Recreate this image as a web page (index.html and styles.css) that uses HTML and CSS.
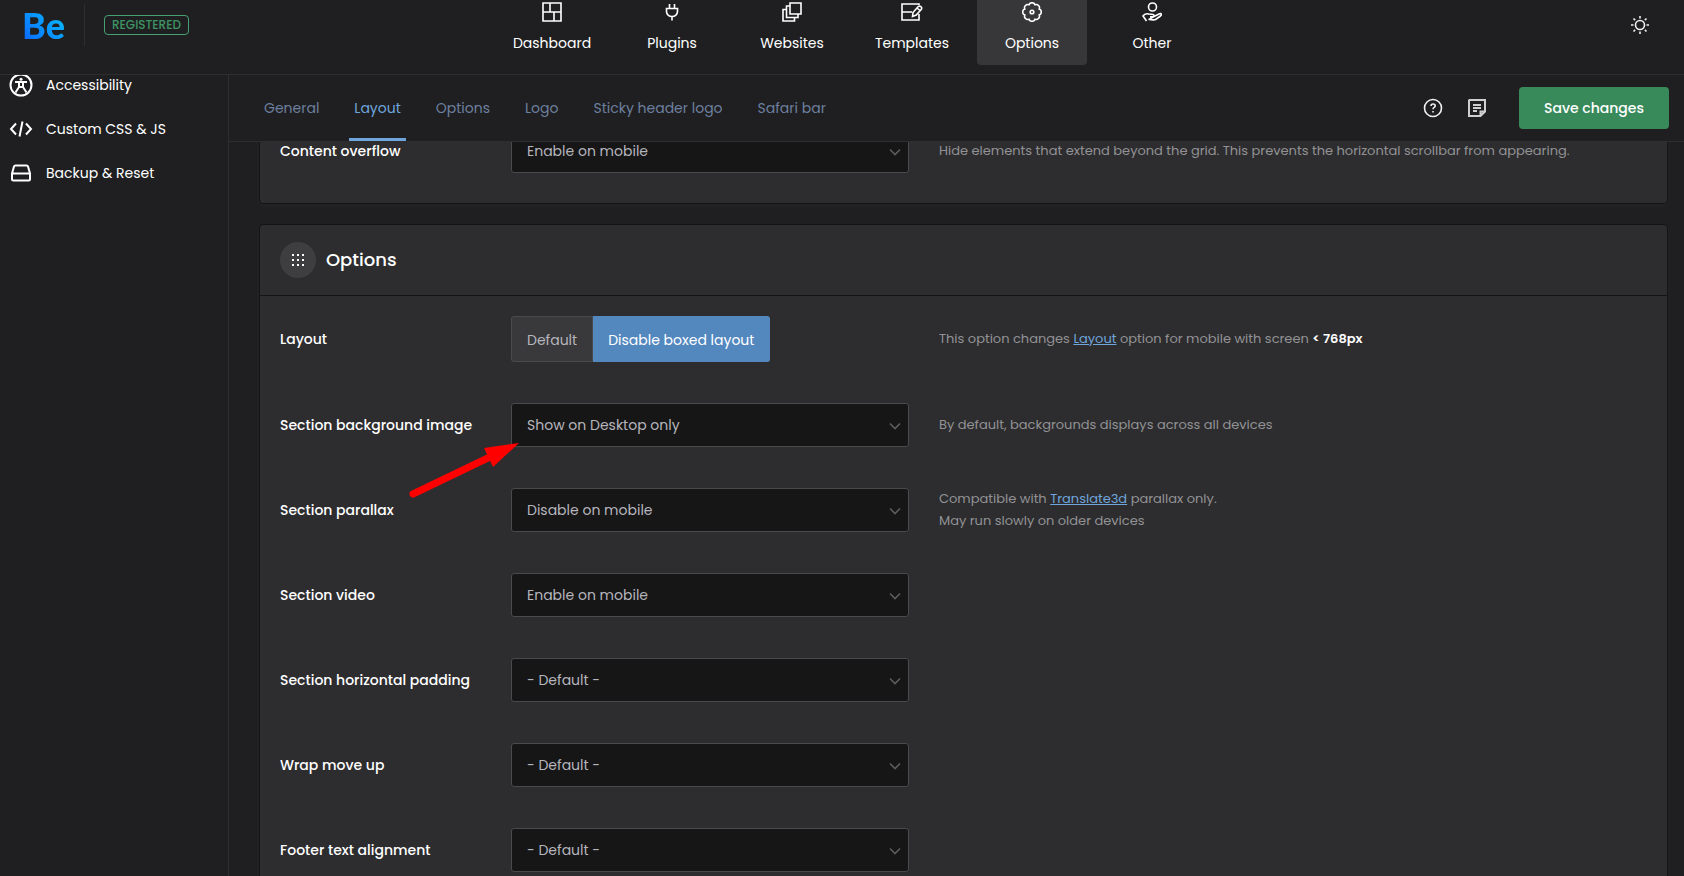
FILE: index.html
```html
<!DOCTYPE html>
<html lang="en">
<head>
<meta charset="utf-8">
<title>Theme Options</title>
<link rel="stylesheet" href="styles.css">
</head>
<body>
<div class="app">
  <header class="topbar">
    <div class="brand">
      <a class="logo" href="#">Be</a>
      <span class="status">REGISTERED</span>
    </div>
    <nav class="main-nav" aria-label="Main">
      <a href="#"><svg viewBox="0 0 20 20"><path d="M1 1h18v18H1zM1 10h18M8 1v9M12 10v9"/></svg>Dashboard</a>
      <a href="#"><svg viewBox="0 0 20 20"><path d="M7.500 2v4.500M12.500 2v4.500M4.500 6.500h11v3a5.500 5 0 0 1-11 0zM10 14.500v4"/></svg>Plugins</a>
      <a href="#"><svg viewBox="0 0 20 20"><path d="M8 1h11v11H8zM8 4H4.500v11.500H16V12M4.500 7.500H1V19h11.500v-3.500"/></svg>Websites</a>
      <a href="#"><svg class="wide" viewBox="0 0 22 20"><path d="M18 3V2H1v16h17v-6M1 10h10M11.500 14.500l.5-4 5-5.700c1.800-1.800 4.800.4 3.200 2.700l-5 5.500zM16 6l3 2.500"/></svg>Templates</a>
      <a class="active" href="#"><svg viewBox="0 0 20 20"><circle cx="10" cy="10" r="1.800"/><path d="M17.200 7a3.200 3.200 0 0 1 0 6a3.200 3.200 0 0 1-4.200 4.200a3.200 3.200 0 0 1-6 0a3.200 3.200 0 0 1-4.200-4.200a3.200 3.200 0 0 1 0-6a3.200 3.200 0 0 1 4.200-4.200a3.200 3.200 0 0 1 6 0a3.200 3.200 0 0 1 4.200 4.200z"/></svg>Options</a>
      <a href="#"><svg viewBox="0 0 20 20"><circle cx="10.500" cy="5" r="4"/><path d="M4.500 19l-3.500-5c1.500-2.500 4-2.500 6-2l4 .5c1.500.3 1.500 2.200 0 2.300H8M12.500 14.200l5-2.400c2-.8 2.500 1 1 2.200l-5 3.500c-1.500 1-5.500-.3-7 .1z"/></svg>Other</a>
    </nav>
    <button class="icon-button" aria-label="Switch theme"><svg viewBox="0 0 20 20"><circle cx="10" cy="10" r="4.500"/><path d="M10 1v2.500M10 16.500V19M1 10h2.500M16.500 10H19M3.500 3.500l1.600 1.600M14.900 14.900l1.600 1.600M3.500 16.500l1.600-1.600M14.900 5.100l1.600-1.600"/></svg></button>
  </header>

  <div class="workspace">
    <nav class="sidebar" aria-label="Sections">
      <a href="#"><svg viewBox="0 0 24 24"><circle cx="12" cy="12" r="10.500"/><circle class="solid" cx="12" cy="6.200" r="1.500"/><path d="M6 9h12M10 9v5l-3.500 5.500M14 9v5l3.500 5.500M10.500 14h3"/></svg>Accessibility</a>
      <a href="#"><svg viewBox="0 0 24 24"><path d="M7 6.500L2 12l5 5.500M17 6.500l5 5.500-5 5.500M13.500 4.500l-3 15"/></svg>Custom CSS &amp; JS</a>
      <a href="#"><svg viewBox="0 0 24 24"><path d="M3 12.500l2-7q.3-1 1.500-1h11q1.200 0 1.500 1l2 7V18q0 1.500-1.500 1.500h-15Q3 19.500 3 18zM3 12.500h18"/></svg>Backup &amp; Reset</a>
    </nav>

    <div class="content">
      <div class="subbar">
        <nav class="tabs" aria-label="Layout sections">
          <a href="#">General</a>
          <a class="active" href="#">Layout</a>
          <a href="#">Options</a>
          <a href="#">Logo</a>
          <a href="#">Sticky header logo</a>
          <a href="#">Safari bar</a>
        </nav>
        <div class="actions">
          <button class="icon-button" aria-label="Help"><svg viewBox="0 0 20 20"><circle cx="10" cy="10" r="8.500"/><path d="M8 8c0-2.700 4.200-2.700 4.200 0 0 1.500-2.200 1.400-2.200 3.200M10 13v1.500"/></svg></button>
          <button class="icon-button notes" aria-label="Notes"><svg viewBox="0 0 20 20"><path d="M2.500 2h15.500v11.500l-4.500 4.500h-11.500v-15.500zM18 13.500h-4.500v4.500M6 7h8M6 10h8M6 13h4"/></svg></button>
          <button class="save">Save changes</button>
        </div>
      </div>

      <main class="panel">
        <section class="card card-scrolled">
          <div class="rows">
            <div class="row">
              <label for="overflow">Content overflow</label>
              <div class="select"><select id="overflow"><option>Enable on mobile</option></select><svg viewBox="0 0 12 8"><path d="M1 1.500l5 5 5-5"/></svg></div>
              <p>Hide elements that extend beyond the grid. This prevents the horizontal scrollbar from appearing.</p>
            </div>
          </div>
        </section>

        <section class="card">
          <h2><span class="grip"><svg viewBox="0 0 12 12"><path d="M0 1h12M0 6h12M0 11h12"/></svg></span>Options</h2>
          <div class="rows">
            <div class="row">
              <span class="label" id="layout-label">Layout</span>
              <div class="segmented" role="group" aria-labelledby="layout-label"><button>Default</button><button class="active">Disable boxed layout</button></div>
              <p>This option changes <a href="#">Layout</a> option for mobile with screen <b>&lt; 768px</b></p>
            </div>
            <div class="row">
              <label for="bg">Section background image</label>
              <div class="select"><select id="bg"><option>Show on Desktop only</option></select><svg viewBox="0 0 12 8"><path d="M1 1.500l5 5 5-5"/></svg>
                <svg class="pointer" viewBox="0 0 112 58"><path class="shaft" d="M5 53L84 15"/><path class="head" d="M111 2L76 7l9 19z"/></svg>
              </div>
              <p>By default, backgrounds displays across all devices</p>
            </div>
            <div class="row">
              <label for="parallax">Section parallax</label>
              <div class="select"><select id="parallax"><option>Disable on mobile</option></select><svg viewBox="0 0 12 8"><path d="M1 1.500l5 5 5-5"/></svg></div>
              <p>Compatible with <a href="#">Translate3d</a> parallax only.<br>May run slowly on older devices</p>
            </div>
            <div class="row">
              <label for="video">Section video</label>
              <div class="select"><select id="video"><option>Enable on mobile</option></select><svg viewBox="0 0 12 8"><path d="M1 1.500l5 5 5-5"/></svg></div>
            </div>
            <div class="row">
              <label for="padding">Section horizontal padding</label>
              <div class="select"><select id="padding"><option>- Default -</option></select><svg viewBox="0 0 12 8"><path d="M1 1.500l5 5 5-5"/></svg></div>
            </div>
            <div class="row">
              <label for="wrap">Wrap move up</label>
              <div class="select"><select id="wrap"><option>- Default -</option></select><svg viewBox="0 0 12 8"><path d="M1 1.500l5 5 5-5"/></svg></div>
            </div>
            <div class="row">
              <label for="footer">Footer text alignment</label>
              <div class="select"><select id="footer"><option>- Default -</option></select><svg viewBox="0 0 12 8"><path d="M1 1.500l5 5 5-5"/></svg></div>
            </div>
          </div>
        </section>
      </main>
    </div>
  </div>
</div>
</body>
</html>
```

FILE: styles.css
```css
* { box-sizing: border-box; }

body {
  margin: 0;
  background: #1f1f21;
  color: #fff;
  font: 14px/22px Poppins, Inter, sans-serif;
}

a { color: inherit; text-decoration: none; }

button, select { font: inherit; color: inherit; margin: 0; }

svg {
  fill: none;
  stroke: currentColor;
  stroke-width: 1.6;
  flex: none;
}

svg .solid { fill: currentColor; stroke: none; }

.app {
  display: flex;
  flex-direction: column;
  height: 100vh;
  overflow: hidden;
}

/* Top bar */
.topbar {
  display: grid;
  grid-template-columns: 1fr auto 1fr;
  border-bottom: 1px solid #2e2e30;
  padding: 0 22px 9px;
}

.brand {
  display: flex;
  align-items: center;
  height: 42px;
  margin-top: 4px;
}

.logo {
  width: 63px;
  border-right: 1px solid #2e2e30;
  font: 900 36px/42px Lato, sans-serif;
  background: linear-gradient(45deg, #0a6cff 10%, #08b0ff 60%);
  background-clip: text;
  color: transparent;
}

.status {
  margin-left: 19px;
  padding: 0 7px;
  border: 1px solid #46a070;
  border-radius: 4px;
  color: #3d9364;
  font-size: 12px;
  font-weight: 500;
  line-height: 18px;
}

.main-nav { display: flex; gap: 10px; margin-left: 20px; }

.main-nav a {
  display: flex;
  flex-direction: column;
  align-items: center;
  gap: 10px;
  width: 110px;
  padding: 2px 0 11px;
  border-radius: 0 0 4px 4px;
}

.main-nav .active { background: #37373a; }

.main-nav svg { width: 20px; height: 20px; }
.main-nav .wide { width: 22px; }

.icon-button {
  display: flex;
  padding: 0;
  border: 0;
  background: none;
  color: #f0f0f2;
  cursor: pointer;
}

.icon-button svg { width: 20px; height: 20px; }

.notes { color: #cfcfd2; }
.notes svg { stroke-width: 2; }

.topbar .icon-button {
  justify-self: end;
  align-self: start;
  margin-top: 15px;
  padding-right: 12px;
}

/* Body */
.workspace { display: flex; flex: 1; min-height: 0; }

.sidebar {
  width: 229px;
  flex: none;
  overflow: hidden;
  border-right: 1px solid #2e2e30;
}

.sidebar a {
  display: flex;
  align-items: center;
  gap: 13px;
  height: 44px;
  padding-left: 9px;
}

.sidebar a:first-child { margin-top: -12px; }
.sidebar svg { width: 24px; height: 24px; stroke-width: 2; }

.content {
  display: flex;
  flex-direction: column;
  flex: 1;
  min-width: 0;
}

.subbar {
  display: flex;
  justify-content: space-between;
  flex: none;
  height: 67px;
  padding: 0 15px 0 30px;
  border-bottom: 1px solid #2e2e30;
}

.tabs { display: flex; gap: 25px; color: #6d7f9f; }

.tabs a {
  display: flex;
  align-items: center;
  padding: 3px 5px 0;
  border-bottom: 3px solid transparent;
}

.tabs .active { color: #6fa5dd; border-color: #6fa5dd; }

.actions { display: flex; align-items: center; gap: 24px; }

.save {
  width: 150px;
  height: 42px;
  margin-left: 8px;
  border: 0;
  border-radius: 4px;
  background: #388a5b;
  font-weight: 500;
  cursor: pointer;
}

.panel {
  flex: 1;
  overflow: hidden;
  padding: 0 16px 0 30px;
}

.card {
  margin-bottom: 20px;
  border: 1px solid #141415;
  border-radius: 4px;
  background: #2d2d2f;
  box-shadow: 0 2px 6px rgba(255, 255, 255, .03);
}

.card-scrolled { margin-top: -34px; }

h2 {
  display: flex;
  align-items: center;
  gap: 10px;
  margin: 0;
  padding: 17px 20px;
  border-bottom: 1px solid #141415;
  font-size: 18px;
  font-weight: 500;
}

.grip {
  display: flex;
  align-items: center;
  justify-content: center;
  width: 36px;
  height: 36px;
  border-radius: 50%;
  background: #3e3e40;
}

.grip svg { width: 12px; height: 12px; stroke-width: 2; stroke-dasharray: 2 3; }

.rows {
  display: flex;
  flex-direction: column;
  gap: 41px;
  padding: 20px 20px 30px;
}

.row {
  display: grid;
  grid-template-columns: 231px minmax(0, 398px) minmax(0, 1fr);
  align-items: center;
}

.row label, .label { font-weight: 500; }

.row p {
  margin: -6px 0 -6px 30px;
  color: #929295;
  font-size: 13px;
}

.row p a { color: #6fa5dd; text-decoration: underline; }
.row p b { color: #fff; font-weight: 600; }

.select { position: relative; }

.select select {
  display: block;
  appearance: none;
  width: 100%;
  height: 44px;
  padding: 0 36px 0 15px;
  border: 1px solid #4a4a4d;
  border-radius: 3px;
  background: #161616;
  color: #b5b5bd;
}

.select svg {
  position: absolute;
  top: 19px;
  right: 8px;
  width: 12px;
  height: 8px;
  color: #5d5d60;
  pointer-events: none;
}

.select .pointer {
  top: 38px;
  right: auto;
  left: -103px;
  width: 112px;
  height: 58px;
  z-index: 1;
}

.pointer .shaft { stroke: #f00; stroke-width: 7; stroke-linecap: round; }
.pointer .head { fill: #f00; stroke: none; }

.segmented { display: flex; }

.segmented button {
  height: 46px;
  padding: 2px 15px 0;
  border: 1px solid #4a4a4d;
  border-radius: 3px 0 0 3px;
  background: #39393b;
  color: #b5b5bd;
}

.segmented .active {
  border-width: 1px 1px 1px 0;
  border-color: #5388bf;
  border-radius: 0 3px 3px 0;
  background: #5388bf;
  color: #fff;
}
```
